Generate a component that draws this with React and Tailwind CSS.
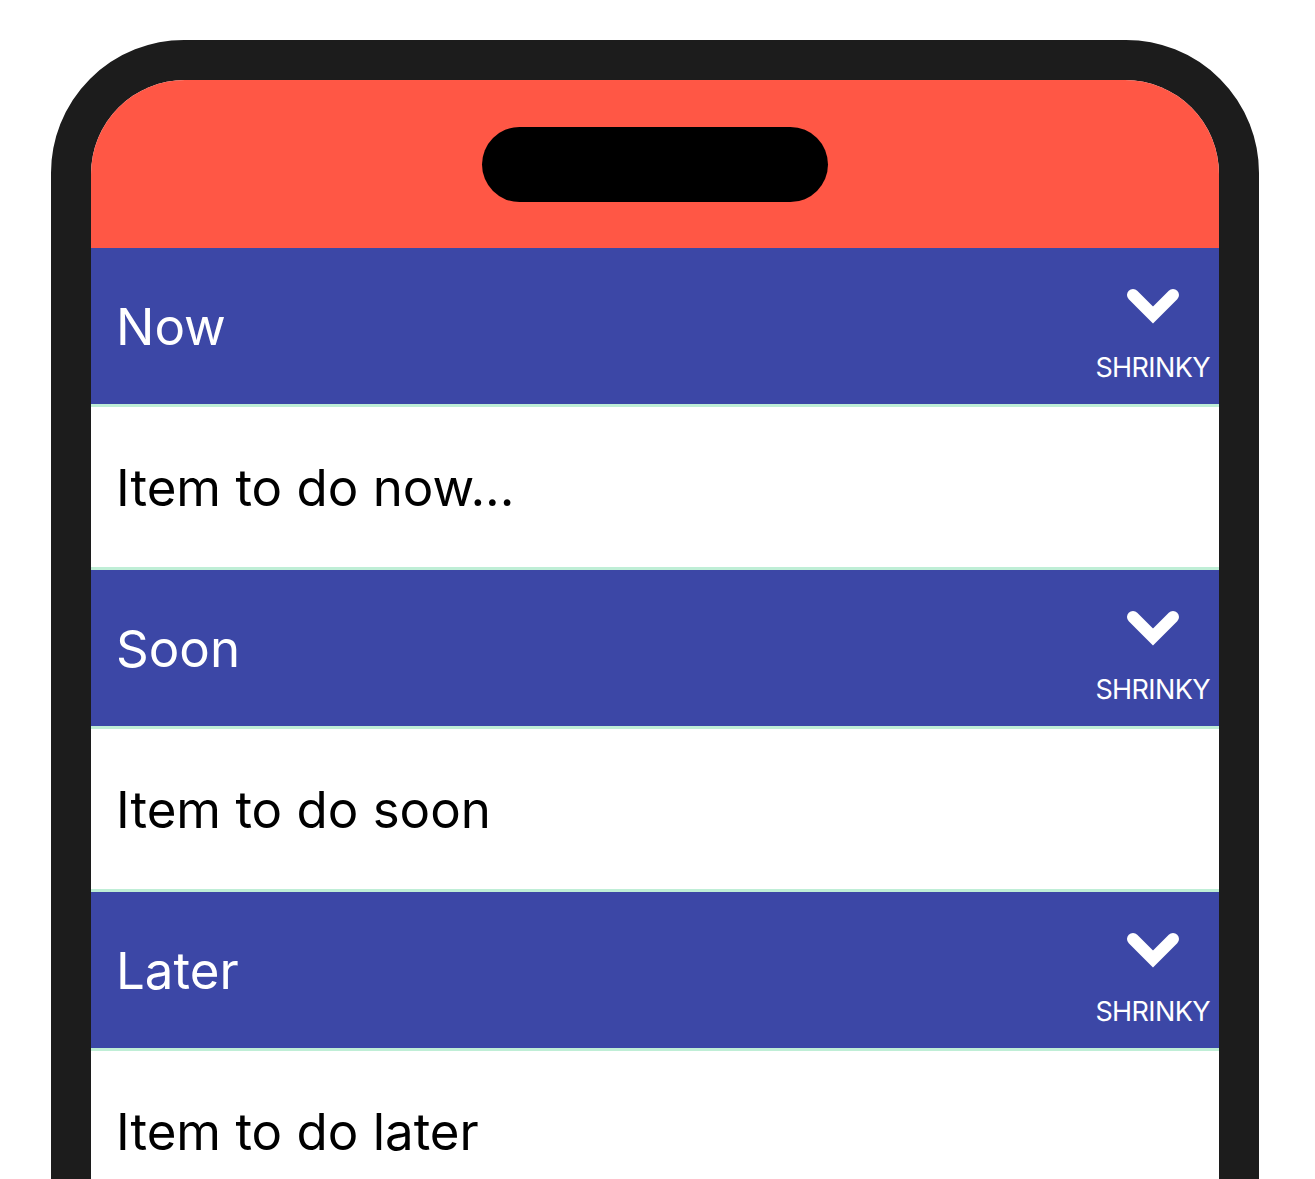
import React from 'react';

const sections = [
  { title: 'Now', item: 'Item to do now...' },
  { title: 'Soon', item: 'Item to do soon' },
  { title: 'Later', item: 'Item to do later' },
];

const Chevron = () => (
  <svg width="58" height="40" viewBox="0 0 58 40" fill="none">
    <polyline
      points="9,9 29,29 49,9"
      stroke="white"
      strokeWidth="12"
      strokeLinecap="round"
      strokeLinejoin="miter"
    />
  </svg>
);

const SectionHeader = ({ title }) => (
  <div className="flex justify-between h-[156px] bg-[#3c47a6] border-b-[3px] border-[#bfeed6] box-content">
    <h2 className="self-center pl-[25px] text-[51px] leading-none text-white">{title}</h2>
    <button className="self-end flex flex-col items-center pr-[9px] pb-[23px] text-white">
      <Chevron />
      <span className="mt-[28px] text-[27px] tracking-[-0.6px] leading-none">SHRINKY</span>
    </button>
  </div>
);

const App = () => {
  return (
    <div
      className="h-[1179px] overflow-hidden bg-white pt-[40px] pl-[51px]"
      style={{ fontFamily: 'Inter, "Noto Sans", sans-serif' }}
    >
      {/* phone frame */}
      <div className="w-[1208px] h-[1300px] border-[40px] border-[#1c1c1c] bg-[#1c1c1c] rounded-t-[133px]">
        <div className="h-full bg-white rounded-t-[94px] overflow-hidden">
          {/* status area with the island */}
          <div className="h-[168px] bg-[#ff5745] flex justify-center pt-[47px]">
            <div className="w-[346px] h-[75px] bg-black rounded-full" />
          </div>

          {sections.map(section => (
            <div key={section.title}>
              <SectionHeader title={section.title} />
              <div className="h-[160px] flex items-center pl-[25px] border-b-[3px] border-[#bfeed6] box-content">
                <span className="text-[51px] leading-none text-black">{section.item}</span>
              </div>
            </div>
          ))}
        </div>
      </div>
    </div>
  );
};

export default App;
